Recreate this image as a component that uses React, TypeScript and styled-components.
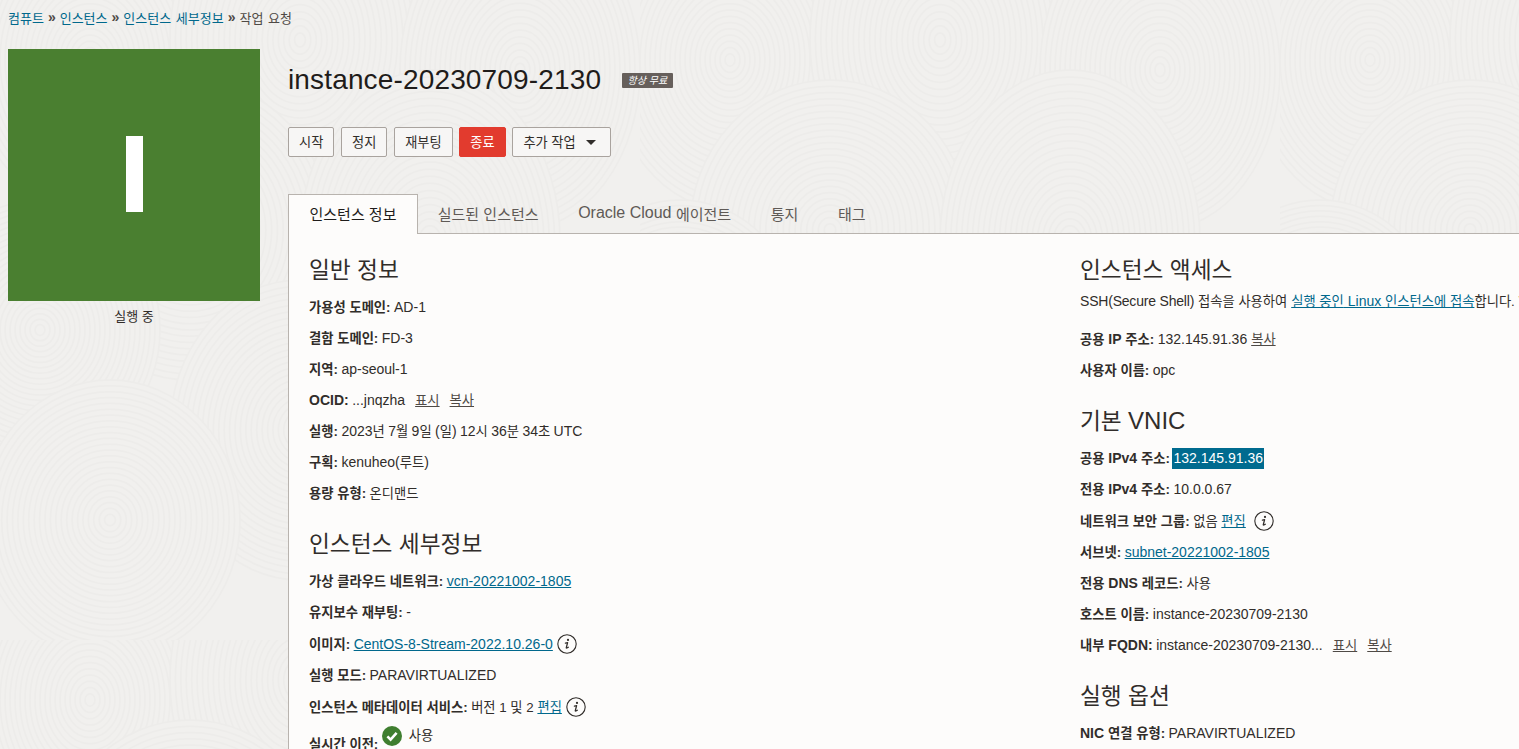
import React from 'react'
import styled, { createGlobalStyle } from 'styled-components'

const FONT = `"Liberation Sans", "Noto Sans CJK KR", Arial, sans-serif`

// faint fingerprint swirls of the console background, drawn as one repeating tile
const swirls = [
  [90, 60, 120, 150],
  [300, 40, 130, 170],
  [520, 70, 120, 160],
  [190, 230, 140, 150],
  [430, 240, 130, 170],
  [40, 330, 120, 130],
  [300, 430, 130, 150],
  [540, 400, 110, 160],
  [110, 520, 130, 140],
  [450, 560, 130, 140],
]
const tileRings = swirls
  .map(([cx, cy, rx, ry]) => {
    let rings = ''
    for (let i = 0; i < 24; i++) {
      const k = 1 - i / 24
      rings += `<ellipse cx="${cx}" cy="${cy}" rx="${(rx * k).toFixed(1)}" ry="${(ry * k).toFixed(1)}" fill="${i === 0 ? '#f1f0ee' : 'none'}"/>`
    }
    return rings
  })
  .join('')
const tile = `<svg xmlns="http://www.w3.org/2000/svg" width="640" height="640"><rect width="640" height="640" fill="#f1f0ee"/><g stroke="#edecea" stroke-width="1.5">${tileRings}</g></svg>`

const GlobalStyle = createGlobalStyle`
  html, body {
    margin: 0;
    padding: 0;
    height: 749px;
    overflow: hidden;
  }
  body {
    background-color: #f1f0ee;
    background-image: url("data:image/svg+xml,${encodeURIComponent(tile)}");
    color: #312d2a;
    font-family: ${FONT};
    font-size: 14px;
  }
  * { box-sizing: border-box; }
`

const Ko = styled.span`
  font-size: 13.3px;
`

const Page = styled.div`
  width: 1519px;
  height: 749px;
  overflow: hidden;
  padding: 8px 0 0 8px;
`

const Breadcrumbs = styled.nav`
  height: 20px;
  padding-bottom: 2px;
  display: flex;
  align-items: center;
  font-size: 13px;
  gap: 4px;
  word-spacing: 1px;
  color: #4f4a46;
`

const Crumb = styled.a`
  color: #00688c;
`

const CrumbSep = styled.span`
  font-size: 14px;
  font-weight: bold;
  color: #4f4a46;
  margin-top: -1px;
`

const Columns = styled.div`
  display: flex;
  gap: 28px;
  margin-top: 21px;
`

const Sidebar = styled.aside`
  width: 252px;
  flex: none;
`

const Tile = styled.div`
  width: 252px;
  height: 252px;
  background: #4a7f30;
  color: #fff;
  display: flex;
  align-items: center;
  justify-content: center;
`

const TileMark = styled.div`
  width: 17px;
  height: 76px;
  margin-top: -3px;
  background: #fff;
`

const Status = styled.div`
  margin-top: 6px;
  height: 20px;
  line-height: 20px;
  text-align: center;
  font-size: 13px;
`

const Main = styled.main`
  flex: none;
  width: 1600px;
`

const TitleRow = styled.div`
  display: flex;
  align-items: center;
  height: 34px;
  margin-top: 14px;
`

const Title = styled.h1`
  margin: 0;
  font-size: 28px;
  font-weight: normal;
  letter-spacing: 0.15px;
  color: #1f1c1a;
`

const Badge = styled.span`
  margin-left: 21px;
  height: 15px;
  line-height: 15px;
  padding: 0 5.5px;
  border-radius: 1px;
  background: #665f5b;
  color: #fff;
  font-size: 10px;
  font-style: italic;
`

const Actions = styled.div`
  display: flex;
  gap: 6.8px;
  margin-top: 30px;
`

const Button = styled.button<{ $danger?: boolean }>`
  height: 30px;
  padding: 0 10px 2px;
  border-radius: 2px;
  border: 1px solid ${(p) => (p.$danger ? '#e23b2e' : '#a9a39e')};
  background: ${(p) => (p.$danger ? '#e23b2e' : '#f7f6f5')};
  color: ${(p) => (p.$danger ? '#fff' : '#312d2a')};
  font-family: ${FONT};
  font-size: 13.2px;
  display: flex;
  align-items: center;
  gap: 9px;
`

const Caret = styled.span`
  width: 0;
  height: 0;
  border-left: 5.5px solid transparent;
  border-right: 5.5px solid transparent;
  border-top: 5px solid #312d2a;
  margin: 3px 4px 0 1px;
`

const Tabs = styled.div`
  display: flex;
  margin-top: 37px;
  height: 40px;
  position: relative;
  z-index: 1;
`

const Tab = styled.div<{ $active?: boolean }>`
  height: 40px;
  padding: 0 ${(p) => (p.$active ? 20.5 : 18.8)}px 3px;
  display: flex;
  align-items: center;
  white-space: pre;
  font-size: 15px;
  color: ${(p) => (p.$active ? '#1f1c1a' : '#5f5a56')};
  background: ${(p) => (p.$active ? '#fdfcfb' : 'transparent')};
  border: 1px solid ${(p) => (p.$active ? '#b8b3ae' : 'transparent')};
  border-bottom: none;
`

const TabLatin = styled.span`
  font-size: 16px;
`

const Panel = styled.section`
  margin-top: -1px;
  background: #fdfcfb;
  border: 1px solid #b8b3ae;
  padding: 22px 20px 40px;
  display: grid;
  grid-template-columns: 771px 771px;
`

const Section = styled.div`
  margin-bottom: 26px;
`

const Heading = styled.h2`
  margin: 0 0 13px;
  height: 28px;
  line-height: 28px;
  font-size: 22.7px;
  font-weight: normal;
  color: #312d2a;
`

const HeadingLatin = styled.span`
  font-size: 24px;
`

const Lead = styled.p`
  margin: -6px 0 17px;
  line-height: 21px;
  white-space: pre;
`

const LeadLatin = styled.span`
  letter-spacing: -0.2px;
`

const Row = styled.div`
  min-height: 21px;
  line-height: 21px;
  margin-bottom: 10px;
  white-space: pre;
  display: flex;
  align-items: center;
`

const Label = styled.b`
  margin-right: 3.5px;
  font-weight: bold;
`

const DateText = styled.span`
  word-spacing: -0.5px;
`

const Link = styled.a`
  color: #00688c;
  text-decoration: underline;
`

const Action = styled.a<{ $gap?: number }>`
  color: #4f4a46;
  font-size: 13.3px;
  text-decoration: underline;
  margin-left: ${(p) => p.$gap ?? 10}px;
`

const Selected = styled.span`
  background: #006b8f;
  color: #fff;
  padding: 0 1px;
  margin-left: -1px;
`

const InfoSvg = styled.svg<{ $gap: number }>`
  width: 20px;
  height: 20px;
  margin: 1px 0 1px ${(p) => p.$gap}px;
  flex: none;
`

const CheckSvg = styled.svg`
  width: 20px;
  height: 20px;
  flex: none;
  margin: -12px 7px 0 0;
`

const TextRaised = styled(Ko)`
  margin-top: -12px;
`

const LabelLowered = styled(Label)`
  margin-top: 6px;
`

const Info = ({ gap = 4 }: { gap?: number }) => (
  <InfoSvg $gap={gap} viewBox="0 0 20 20" fill="none">
    <circle cx="10" cy="10" r="9.2" stroke="#312d2a" strokeWidth="1.1" />
    <circle cx="11" cy="5.9" r="1.1" fill="#312d2a" />
    <path
      d="M8.4 9.1 L10.6 8.7 L9.3 13.6 Q9.2 14.3 9.9 14 L11.3 13.2"
      stroke="#312d2a"
      strokeWidth="1.3"
      strokeLinecap="round"
      strokeLinejoin="round"
    />
  </InfoSvg>
)

const Check = () => (
  <CheckSvg viewBox="0 0 20 20">
    <circle cx="10" cy="10" r="10" fill="#3f7e2f" />
    <path
      d="M5.4 10.4 L8.6 13.6 L14.6 6.9"
      fill="none"
      stroke="#fff"
      strokeWidth="2.6"
    />
  </CheckSvg>
)

export default function App() {
  return (
    <Page>
      <GlobalStyle />
      <Breadcrumbs>
        <Crumb>컴퓨트</Crumb>
        <CrumbSep>»</CrumbSep>
        <Crumb>인스턴스</Crumb>
        <CrumbSep>»</CrumbSep>
        <Crumb>인스턴스 세부정보</Crumb>
        <CrumbSep>»</CrumbSep>
        <span>작업 요청</span>
      </Breadcrumbs>
      <Columns>
        <Sidebar>
          <Tile>
            <TileMark />
          </Tile>
          <Status>실행 중</Status>
        </Sidebar>
        <Main>
          <TitleRow>
            <Title>instance-20230709-2130</Title>
            <Badge>항상 무료</Badge>
          </TitleRow>
          <Actions>
            <Button>시작</Button>
            <Button>정지</Button>
            <Button>재부팅</Button>
            <Button $danger>종료</Button>
            <Button>
              추가 작업 <Caret />
            </Button>
          </Actions>
          <Tabs>
            <Tab $active>인스턴스 정보</Tab>
            <Tab>실드된 인스턴스</Tab>
            <Tab>
              <TabLatin>Oracle Cloud </TabLatin>에이전트
            </Tab>
            <Tab>통지</Tab>
            <Tab>태그</Tab>
          </Tabs>
          <Panel>
            <div>
              <Section>
                <Heading>일반 정보</Heading>
                <Row>
                  <Label><Ko>가용성 도메인:</Ko></Label>AD-1
                </Row>
                <Row>
                  <Label><Ko>결함 도메인:</Ko></Label>FD-3
                </Row>
                <Row>
                  <Label><Ko>지역:</Ko></Label>ap-seoul-1
                </Row>
                <Row>
                  <Label>OCID:</Label>...jnqzha
                  <Action>표시</Action>
                  <Action>복사</Action>
                </Row>
                <Row>
                  <Label><Ko>실행:</Ko></Label>
                  <DateText>
                    2023<Ko>년</Ko> 7<Ko>월</Ko> 9<Ko>일</Ko> (<Ko>일</Ko>) 12<Ko>시</Ko> 36<Ko>분</Ko> 34<Ko>초</Ko> UTC
                  </DateText>
                </Row>
                <Row>
                  <Label><Ko>구획:</Ko></Label>
                  <span>
                    kenuheo(<Ko>루트</Ko>)
                  </span>
                </Row>
                <Row>
                  <Label><Ko>용량 유형:</Ko></Label>
                  <Ko>온디맨드</Ko>
                </Row>
              </Section>
              <Section>
                <Heading>인스턴스 세부정보</Heading>
                <Row>
                  <Label><Ko>가상 클라우드 네트워크:</Ko></Label>
                  <Link>vcn-20221002-1805</Link>
                </Row>
                <Row>
                  <Label><Ko>유지보수 재부팅:</Ko></Label>-
                </Row>
                <Row>
                  <Label><Ko>이미지:</Ko></Label>
                  <Link>CentOS-8-Stream-2022.10.26-0</Link>
                  <Info />
                </Row>
                <Row>
                  <Label><Ko>실행 모드:</Ko></Label>PARAVIRTUALIZED
                </Row>
                <Row>
                  <Label><Ko>인스턴스 메타데이터 서비스:</Ko></Label>
                  <Ko>버전 1 및 2 </Ko>
                  <Link><Ko>편집</Ko></Link>
                  <Info />
                </Row>
                <Row>
                  <LabelLowered><Ko>실시간 이전:</Ko></LabelLowered>
                  <Check />
                  <TextRaised>사용</TextRaised>
                </Row>
              </Section>
            </div>
            <div>
              <Section>
                <Heading>인스턴스 액세스</Heading>
                <Lead>
                  <LeadLatin>SSH(Secure Shell)</LeadLatin> <Ko>접속을 사용하여</Ko>{' '}
                  <Link>
                    <Ko>실행 중인</Ko> Linux <Ko>인스턴스에 접속</Ko>
                  </Link>
                  <Ko>합니다.</Ko> Windows <Ko>인스턴스에 접속하려면 원격 데스크톱을 사용합니다.</Ko>
                </Lead>
                <Row>
                  <Label><Ko>공용</Ko> IP <Ko>주소:</Ko></Label>132.145.91.36
                  <Action $gap={4}>복사</Action>
                </Row>
                <Row>
                  <Label><Ko>사용자 이름:</Ko></Label>opc
                </Row>
              </Section>
              <Section>
                <Heading>
                  기본 <HeadingLatin>VNIC</HeadingLatin>
                </Heading>
                <Row>
                  <Label><Ko>공용</Ko> IPv4 <Ko>주소:</Ko></Label>
                  <Selected>132.145.91.36</Selected>
                </Row>
                <Row>
                  <Label><Ko>전용</Ko> IPv4 <Ko>주소:</Ko></Label>10.0.0.67
                </Row>
                <Row>
                  <Label><Ko>네트워크 보안 그룹:</Ko></Label>
                  <Ko>없음 </Ko>
                  <Link><Ko>편집</Ko></Link>
                  <Info gap={8} />
                </Row>
                <Row>
                  <Label><Ko>서브넷:</Ko></Label>
                  <Link>subnet-20221002-1805</Link>
                </Row>
                <Row>
                  <Label><Ko>전용</Ko> DNS <Ko>레코드:</Ko></Label>
                  <Ko>사용</Ko>
                </Row>
                <Row>
                  <Label><Ko>호스트 이름:</Ko></Label>instance-20230709-2130
                </Row>
                <Row>
                  <Label><Ko>내부</Ko> FQDN:</Label>instance-20230709-2130...
                  <Action>표시</Action>
                  <Action>복사</Action>
                </Row>
              </Section>
              <Section>
                <Heading>실행 옵션</Heading>
                <Row>
                  <Label>NIC <Ko>연결 유형:</Ko></Label>PARAVIRTUALIZED
                </Row>
              </Section>
            </div>
          </Panel>
        </Main>
      </Columns>
    </Page>
  )
}
